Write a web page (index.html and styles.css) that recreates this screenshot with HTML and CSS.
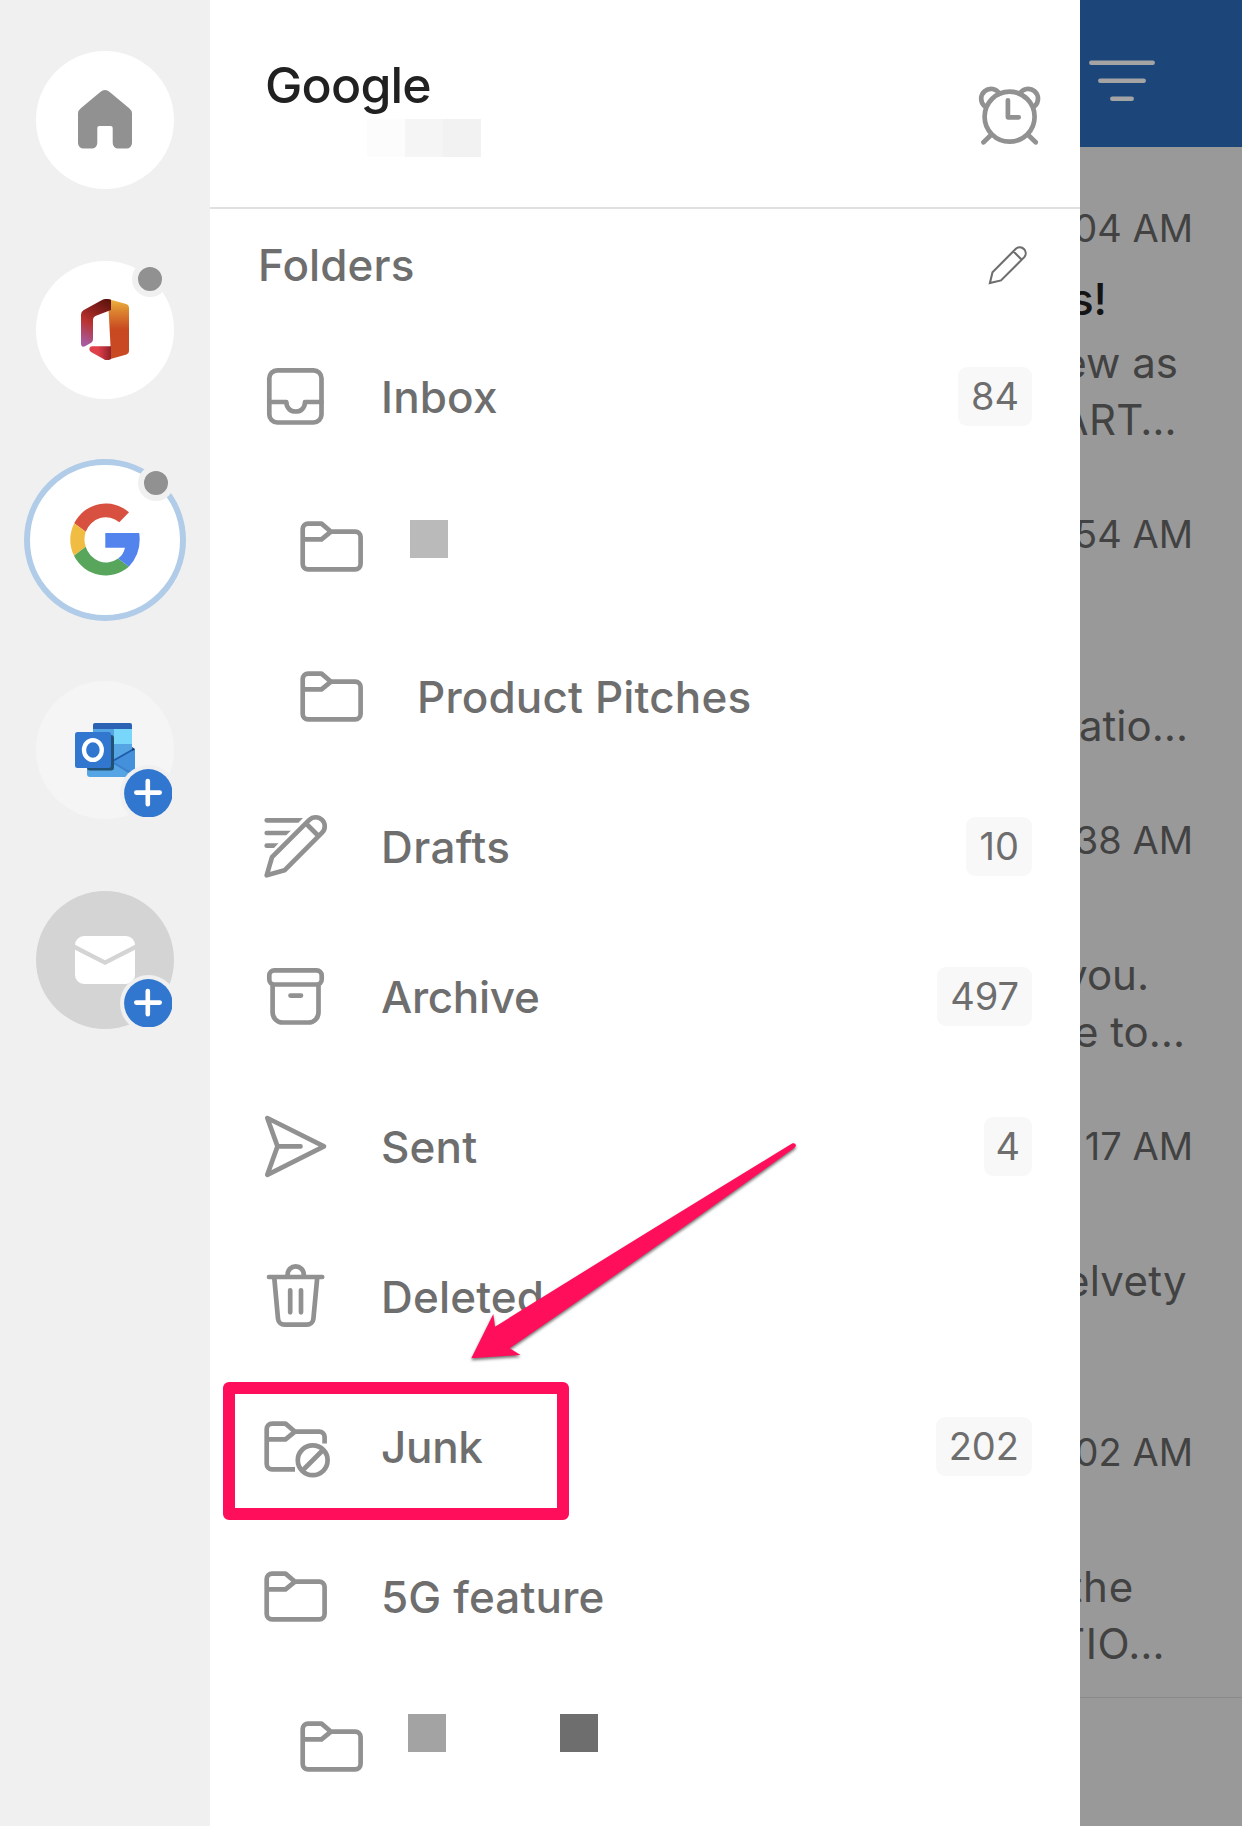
FILE: index.html
```html
<!DOCTYPE html>
<html lang="en">
<head>
<meta charset="utf-8">
<title>Mail folders</title>
<link rel="stylesheet" href="styles.css">
</head>
<body>
<svg class="defs" aria-hidden="true">
  <symbol id="folder" viewBox="0 0 64 64">
    <path d="M8.1 8.6H21.5L31 16.7H55.2a5.4 5.4 0 0 1 5.4 5.4V49a5.4 5.4 0 0 1-5.4 5.4H8.1A5.4 5.4 0 0 1 2.7 49V14a5.4 5.4 0 0 1 5.4-5.4ZM2.7 24.3H21.5L31 16.7"/>
  </symbol>
  <symbol id="plus" viewBox="0 0 48 48">
    <circle cx="24.3" cy="24.3" r="24.2" fill="#3277cf"/>
    <path d="M12.3 23.6H35.7M23.8 12V35.3" stroke="#fff" stroke-width="4.6" stroke-linecap="round"/>
  </symbol>
</svg>
<div class="app">
  <nav class="rail">
    <div class="slot"><div class="avatar">
      <svg class="logo" width="54" height="59" viewBox="0 0 54 59"><path fill="#919191" d="M22.6 1.8a6.6 6.6 0 0 1 8.8 0L51.2 18.2A7 7 0 0 1 54 24V53a5.5 5.5 0 0 1-5.5 5.5H40.2A5.5 5.5 0 0 1 34.7 53V38a2 2 0 0 0-2-2H21.3a2 2 0 0 0-2 2V53a5.5 5.5 0 0 1-5.5 5.5H5.5A5.5 5.5 0 0 1 0 53V24a7 7 0 0 1 2.8-5.8Z"/></svg>
    </div></div>
    <div class="slot"><div class="avatar">
      <svg class="logo" width="48" height="61" viewBox="0 0 48 61">
        <defs>
          <linearGradient id="o1" x1="0" y1="0" x2="0" y2="1"><stop offset="0" stop-color="#ecb63d"/><stop offset=".2" stop-color="#dd8430"/><stop offset=".5" stop-color="#c84820"/><stop offset="1" stop-color="#ca4a24"/></linearGradient>
          <linearGradient id="o2" gradientUnits="userSpaceOnUse" x1="28" y1="2" x2="4" y2="47"><stop offset="0" stop-color="#5f130e"/><stop offset=".3" stop-color="#8c221f"/><stop offset=".55" stop-color="#b8322e"/><stop offset=".95" stop-color="#a85a9e"/></linearGradient>
          <linearGradient id="o3"><stop offset=".4" stop-color="#e0404a"/><stop offset="1" stop-color="#8f2029"/></linearGradient>
        </defs>
        <path fill="url(#o1)" d="M27 0L45.2 5Q48 6 48 9V52Q48 54.8 45.5 55.6L26 61L30 56Z"/>
        <path fill="url(#o2)" d="M30 .8V11L15 16.7Q12 18 12 21V40.5Q12 42.6 10.2 43.7L4 47.2Q0 48.8 0 44.5V15.5Q0 12.5 2.8 11L21.5 .8Q25.5-1 30 .8Z"/>
        <path fill="url(#o3)" d="M11.5 47.3H30V60Q25.5 62.2 22.5 60L10 53Q7.6 51 8.8 48.6Q9.6 47.3 11.5 47.3Z"/>
      </svg>
      <span class="dot"></span>
    </div></div>
    <div class="slot"><div class="avatar avatar-active">
      <svg class="logo" width="70" height="73" viewBox="0 0 70 73">
        <path fill="#d85140" d="M4.2 20.3A35.6 36.4 0 0 1 59 9.3L49.3 19.3A21.5 22.4 0 0 0 15.7 28.8Z"/>
        <path fill="#f0bd42" d="M4.2 20.3A36 37 0 0 0 4 52.7L15.7 43.7A21.5 22.4 0 0 1 15.7 28.8Z"/>
        <path fill="#58a55c" d="M4 52.7A35.6 36.4 0 0 0 58.8 63.7L48.2 55.6A21.5 22.4 0 0 1 15.7 43.7Z"/>
        <path fill="#5384ee" d="M35.3 30H69.2Q72 50 58.8 63.7L48.2 55.6Q53.5 51.5 55 44.7H35.3Z"/>
      </svg>
      <span class="dot dot-active"></span>
    </div></div>
    <div class="slot"><div class="avatar avatar-pale">
      <svg width="60" height="54" viewBox="0 0 60 54">
        <path fill="#55a4e4" d="M18 6H57V26H60V51a3 3 0 0 1-3 3H15a3 3 0 0 1-3-3V20H18Z"/>
        <path fill="#2b62b3" d="M20 0H55a2 2 0 0 1 2 2V6H18V2a2 2 0 0 1 2-2Z"/>
        <path fill="#78d6fb" d="M39 6H57V21H39Z"/>
        <path fill="#4590db" d="M37 39L60 26V51L57 53Z"/>
        <path stroke="#3c80cf" stroke-width="2" d="M37 39L56 50"/>
        <path stroke="#1f5ba8" stroke-width="2" d="M36 39L58 26.5"/>
        <path fill="#13306a" d="M57 24L60 26L57.5 28Z"/>
        <path fill="#215273" d="M12 12H36a3 3 0 0 1 3 3V44.5a3 3 0 0 1-3 3H15a3 3 0 0 1-3-3Z"/>
        <rect y="9" width="36" height="36" rx="2.5" fill="#3277cf"/>
        <ellipse cx="17.9" cy="27" rx="8.9" ry="9.9" fill="none" stroke="#fff" stroke-width="4.3"/>
      </svg>
      <span class="add"><svg width="48" height="48"><use href="#plus"/></svg></span>
    </div></div>
    <div class="slot"><div class="avatar avatar-grey">
      <svg width="60" height="48" viewBox="0 0 60 48">
        <rect width="60" height="48" rx="9" fill="#fff"/>
        <path fill="none" stroke="#d4d4d4" stroke-width="4.3" d="M-2 10.2L30 26.7L62 10.2"/>
      </svg>
      <span class="add"><svg width="48" height="48"><use href="#plus"/></svg></span>
    </div></div>
  </nav>

  <main class="drawer">
    <header class="account">
      <div class="account-text">
        <h1 class="account-name">Google</h1>
        <div class="redacted"><i class="px px-a"></i><i class="px px-b"></i><i class="px px-c"></i></div>
      </div>
      <svg class="icon alarm" viewBox="0 0 64 64">
        <circle cx="31.6" cy="32.7" r="25"/>
        <path d="M6.6 22.1A9.8 9.8 0 1 1 21.5 9.8M56.6 22.1A9.8 9.8 0 1 0 41.7 9.8M13 51L5.5 58.3M50.2 51L57.7 58.3M29.9 16.3V33.3H40.7"/>
      </svg>
    </header>
    <div class="section">
      <h2 class="section-title">Folders</h2>
      <svg class="edit" viewBox="0 0 40 40"><path d="M1.9 38.1L4.5 27.3L28.1 3.5A6 6 0 0 1 36.5 11.9L13 35.4ZM25.3 6.3L33.7 14.7"/></svg>
    </div>
    <ul class="folders">
      <li class="row">
        <svg class="icon" viewBox="0 0 64 64"><rect x="5.3" y="5.3" width="52.2" height="52.2" rx="8"/><path d="M5.3 37H22.3C22.6 43 26.3 46.5 31.7 46.5S40.8 43 41 37H57.5"/></svg>
        <span class="label">Inbox</span><span class="badge">84</span>
      </li>
      <li class="row row-nested">
        <svg class="icon"><use href="#folder"/></svg>
        <span class="redacted redacted-one"><i class="px px-d"></i></span>
      </li>
      <li class="row row-nested">
        <svg class="icon"><use href="#folder"/></svg>
        <span class="label">Product Pitches</span>
      </li>
      <li class="row">
        <svg class="icon" viewBox="0 0 64 64"><path d="M2.7 60.3L8 42.2L45.3 4.9A9 9 0 0 1 58.1 17.7L20.5 55.3ZM42 8.5L54.5 21"/><path class="solid" d="M2.7 3H39L34.4 7.7H2.7a2.35 2.35 0 0 1 0-4.7ZM2.7 15.7H26.8L22.2 20.3H2.7a2.3 2.3 0 0 1 0-4.6ZM2.7 28.3H14.5L10 33H2.7a2.35 2.35 0 0 1 0-4.7Z"/></svg>
        <span class="label label-loose">Drafts</span><span class="badge badge-10">10</span>
      </li>
      <li class="row">
        <svg class="icon" viewBox="0 0 64 64"><path d="M10.3 5.4H52.7a5 5 0 0 1 5 5V14.5a5 5 0 0 1-5 5H10.3a5 5 0 0 1-5-5V10.4a5 5 0 0 1 5-5ZM8.6 19.5V47.5a10 10 0 0 0 10 10H44.5a10 10 0 0 0 10-10V19.5M26.5 30.6H37"/></svg>
        <span class="label label-tight">Archive</span><span class="badge">497</span>
      </li>
      <li class="row">
        <svg class="icon" viewBox="0 0 64 64"><path d="M3.3 3L60 31.4L3.3 59.8L13.5 31.4ZM13.5 31.4H36.5"/></svg>
        <span class="label">Sent</span><span class="badge badge-4">4</span>
      </li>
      <li class="row">
        <svg class="icon" viewBox="0 0 64 64"><path d="M5 12H58.2M23.6 12V9.5a8.1 8.1 0 0 1 16.2 0V12M10.2 12L14 53.7a6.6 6.6 0 0 0 6.6 6H42.8a6.6 6.6 0 0 0 6.6-6L53.3 12M26.2 25.3V47.3M37 25.3V47.3"/></svg>
        <span class="label">Deleted</span>
      </li>
      <li class="row">
        <svg class="icon" viewBox="0 0 64 64"><path class="butt" d="M31 54.4H8.1A5.4 5.4 0 0 1 2.7 49V14a5.4 5.4 0 0 1 5.4-5.4H21.5L31 16.7H55.2a5.4 5.4 0 0 1 5.4 5.4V28.5M2.7 24.3H21.5L31 16.7"/><circle cx="48.7" cy="45.3" r="14.9"/><path d="M38.5 55.5L59 35"/></svg>
        <span class="label label-tight">Junk</span><span class="badge">202</span>
      </li>
      <li class="row">
        <svg class="icon"><use href="#folder"/></svg>
        <span class="label">5G feature</span>
      </li>
      <li class="row row-nested">
        <svg class="icon"><use href="#folder"/></svg>
        <span class="redacted redacted-two"><i class="px px-e"></i><i class="px px-f"></i></span>
      </li>
    </ul>
  </main>

  <aside class="inbox">
    <header class="inbox-bar">
      <svg width="66" height="42" viewBox="0 0 66 42"><path stroke="#a4a4a4" stroke-width="4.5" stroke-linecap="round" d="M2.3 2.7H63.7M11.3 20.7H54.7M23.3 38.7H42.7"/></svg>
    </header>
    <article class="message">
      <p class="time">04 AM</p>
      <p class="subject">s!</p>
      <p class="snippet s1">ew as</p>
      <p class="snippet s2">ART…</p>
    </article>
    <article class="message">
      <p class="time">54 AM</p>
      <p class="subject"></p>
      <p class="snippet"></p>
      <p class="snippet s3">atio…</p>
    </article>
    <article class="message">
      <p class="time">38 AM</p>
      <p class="subject"></p>
      <p class="snippet s4">you.</p>
      <p class="snippet s5">e to…</p>
    </article>
    <article class="message">
      <p class="time">17 AM</p>
      <p class="subject"></p>
      <p class="snippet s6">elvety</p>
      <p class="snippet"></p>
    </article>
    <article class="message message-last">
      <p class="time">02 AM</p>
      <p class="subject"></p>
      <p class="snippet s7">the</p>
      <p class="snippet s8">TIO…</p>
    </article>
  </aside>

  <div class="highlight"></div>
  <svg class="arrow" width="340" height="230" viewBox="465 1138 340 230">
    <path d="M471.3 1358.3L493.3 1314L495 1326.7Q640 1236.5 792.5 1143.3Q795.5 1142.7 796 1145.3Q796 1146.5 793.5 1148.5Q650 1252 509.7 1348.3L520.5 1355Z"/>
  </svg>
</div>
</body>
</html>
```
FILE: styles.css
```css
* { box-sizing: border-box; margin: 0; padding: 0; }

body {
  font-family: Inter, "Liberation Sans", sans-serif;
  background: #fff;
}

.defs { position: absolute; width: 0; height: 0; }

.app {
  position: relative;
  display: grid;
  grid-template-columns: 210px 870px 162px;
  width: 1242px;
  height: 1826px;
  overflow: hidden;
}

/* account rail */
.rail { background: #f0f0f0; padding-top: 15px; }
.slot { height: 210px; display: flex; align-items: center; justify-content: center; }
.avatar {
  position: relative;
  width: 138px;
  height: 138px;
  border-radius: 50%;
  background: #fff;
  display: flex;
  align-items: center;
  justify-content: center;
}
.logo { margin-bottom: 1px; }
.avatar-active { width: 162px; height: 162px; border: 6px solid #b0cce8; }
.avatar-pale { background: #f5f5f5; }
.avatar-grey { background: #d4d4d4; }
.dot {
  position: absolute;
  left: 96px;
  top: 0;
  width: 36px;
  height: 36px;
  border-radius: 50%;
  border: 6px solid #f0f0f0;
  background: #919191;
}
.dot-active { left: 108px; top: 0; }
.add {
  position: absolute;
  left: 84px;
  top: 84px;
  width: 57px;
  height: 57px;
  padding: 4px;
  border-radius: 50%;
  background: #f0f0f0;
}
.add svg { display: block; }

/* folder drawer */
.drawer { background: #fff; overflow: hidden; }
.account {
  height: 209px;
  border-bottom: 2px solid #e0e0e0;
  padding: 55px 38px 0 55px;
  display: flex;
  justify-content: space-between;
}
.account-name { font-size: 50px; font-weight: 500; line-height: 60px; color: #212121; letter-spacing: -0.8px; }
.redacted { display: flex; }
.account .redacted { padding: 4px 0 0 102px; }
.px { width: 38px; height: 38px; }
.px-a { background: #fcfcfc; }
.px-b { background: #f5f5f5; }
.px-c { background: #f2f2f2; }
.px-d { background: #bababa; }
.px-e { background: #a3a3a3; }
.px-f { background: #6e6e6e; }

.icon {
  flex: none;
  width: 64px;
  height: 64px;
  overflow: visible;
  fill: none;
  stroke: #919191;
  stroke-width: 4.7;
  stroke-linecap: round;
  stroke-linejoin: round;
}
.icon .solid { fill: #919191; stroke: none; }
.icon .butt { stroke-linecap: butt; }
.alarm { margin-top: 29px; }

.section {
  height: 113px;
  padding: 0 52px 2px 48px;
  display: flex;
  align-items: center;
  justify-content: space-between;
}
.section-title { font-size: 44px; font-weight: 500; color: #6e6e6e; letter-spacing: 0.1px; }
.edit { width: 40px; height: 40px; fill: none; stroke: #6e6e6e; stroke-width: 2.1; stroke-linejoin: miter; }

.folders { list-style: none; }
.row { height: 150px; padding: 0 48px 0 54px; display: flex; align-items: center; }
.row-nested { padding-left: 90px; }
.label { margin-left: 53px; font-size: 44px; font-weight: 500; color: #6e6e6e; white-space: nowrap; letter-spacing: 0.15px; }
.label-loose { letter-spacing: 0.4px; }
.label-tight { letter-spacing: -0.3px; }
.badge {
  margin: 0 0 1px auto;
  height: 59px;
  padding: 0 13px;
  border-radius: 9px;
  background: #f8f8f8;
  font-size: 38px;
  line-height: 59px;
  color: #6e6e6e;
}
.badge-10 { padding-left: 14px; }
.badge-4 { padding: 0 12px 0 11px; }
.redacted-one { margin: 0 0 16px 46px; }
.redacted-two { margin: 0 0 28px 44px; gap: 114px; }

/* dimmed message list */
.inbox { background: #999; overflow: hidden; color: #424242; }
.inbox-bar { height: 147px; margin-bottom: 20px; padding: 60px 0 0 9px; background: #1c467a; }
.inbox-bar svg { display: block; }
.message {
  height: 306px;
  padding-top: 38px;
  display: flex;
  flex-direction: column;
  align-items: flex-end;
  white-space: nowrap;
}
.message-last { height: 307px; border-bottom: 1px solid #8a8a8a; }
.time { height: 46px; margin: 0 49px 16px 0; font-size: 38px; line-height: 46px; }
.subject { height: 64px; margin: 0 135px 3px 0; font-size: 44px; font-weight: 500; line-height: 64px; color: #141414; }
.snippet { height: 57px; font-size: 42px; line-height: 57px; }
.s1 { margin-right: 64px; }
.s2 { margin-right: 65px; letter-spacing: 0.4px; }
.s3 { margin-right: 54px; }
.s4 { margin-right: 93px; }
.s5 { margin-right: 57px; }
.s6 { margin-right: 55px; letter-spacing: 0.3px; }
.s7 { margin-right: 108px; letter-spacing: 0.8px; }
.s8 { margin-right: 77px; letter-spacing: 0.5px; }

/* annotations over the screen */
.highlight {
  position: absolute;
  left: 223px;
  top: 1382px;
  width: 346px;
  height: 138px;
  border: 12px solid #ff0f5b;
  border-radius: 6px;
}
.arrow { position: absolute; left: 465px; top: 1138px; fill: #ff0f5b; filter: drop-shadow(0 2px 1.5px rgba(0, 0, 0, 0.55)); }
```
